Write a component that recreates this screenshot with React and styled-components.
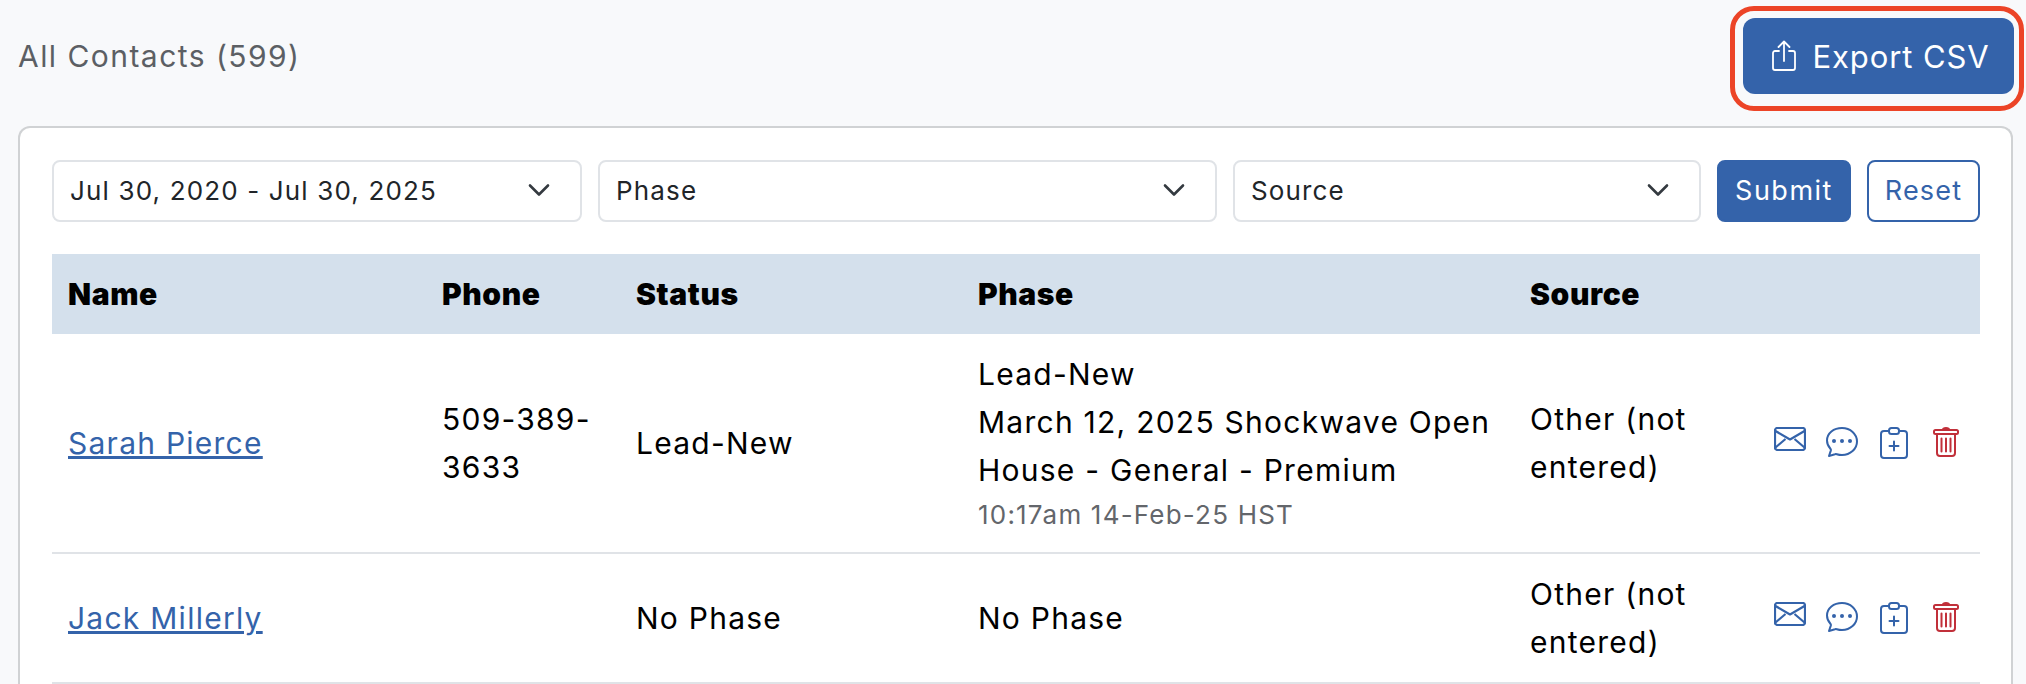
import React from "react";
import styled, { createGlobalStyle } from "styled-components";

const GlobalStyle = createGlobalStyle`
  html, body {
    margin: 0;
    height: 684px;
    overflow: hidden;
    background: #f8f9fb;
    font-family: "Inter", "Liberation Sans", sans-serif;
  }
  * { box-sizing: border-box; }
`;

const BLUE = "#3463aa";

const Page = styled.div`
  padding: 18px 12px 0 18px;
`;

const TopBar = styled.div`
  display: flex;
  align-items: center;
  justify-content: space-between;
  margin-bottom: 32px;
`;

const Title = styled.h1`
  margin: 0;
  font-size: 30px;
  font-weight: 400;
  letter-spacing: 1.45px;
  color: #5c5f64;
`;

const ExportButton = styled.button`
  position: relative;
  width: 271px;
  height: 76px;
  display: flex;
  align-items: center;
  justify-content: center;
  gap: 16px;
  padding: 0 0 0 5px;
  background: ${BLUE};
  color: #fff;
  border: none;
  border-radius: 12px;
  font: inherit;
  font-size: 31px;
  letter-spacing: 0.9px;

  &::after {
    content: "";
    position: absolute;
    top: -12px;
    bottom: -17px;
    left: -13px;
    right: -10px;
    border: 5px solid #ec4427;
    border-radius: 24px;
  }
`;

const Card = styled.div`
  margin-right: 1px;
  padding: 32px 31px 0 32px;
  background: #fff;
  border: 2px solid #d0d2d4;
  border-bottom: none;
  border-radius: 12px 12px 0 0;
`;

const Filters = styled.div`
  display: grid;
  grid-template-columns: 530px 619px 468px 134px 113px;
  gap: 16px;
  height: 62px;
  margin-bottom: 32px;
`;

const Select = styled.div`
  display: flex;
  align-items: center;
  justify-content: space-between;
  padding: 0 30px 2px 16px;
  background: #fff;
  border: 2px solid #e0e3e7;
  border-radius: 8px;
  font-size: 26px;
  letter-spacing: 1.15px;
  color: #212529;
`;

const SubmitButton = styled.button`
  background: ${BLUE};
  color: #fff;
  border: 2px solid ${BLUE};
  border-radius: 8px;
  font: inherit;
  font-size: 27px;
  letter-spacing: 1.5px;
  padding: 0 0 2px;
`;

const ResetButton = styled(SubmitButton)`
  background: #fff;
  color: ${BLUE};
  letter-spacing: 1.2px;
`;

const Table = styled.table`
  width: 100%;
  table-layout: fixed;
  border-collapse: collapse;
  color: #000;
`;

const HeadCell = styled.th`
  width: ${(p) => p.$w}px;
  height: 80px;
  padding: 0 16px;
  background: #d4e0ec;
  text-align: left;
  font-size: 30px;
  font-weight: 900;
  letter-spacing: 0.6px;
`;

const Row = styled.tr`
  border-bottom: 2px solid #e0e3e7;
`;

const Cell = styled.td`
  padding: 16px;
  font-size: 30px;
  line-height: 48px;
  letter-spacing: 1.25px;
  vertical-align: middle;
`;

const ActionCell = styled(Cell)`
  padding: 0 8px 0 0;
`;

const NameLink = styled.a`
  color: ${BLUE};
  text-decoration: underline;
`;

const Stamp = styled.div`
  font-size: 26px;
  line-height: 42px;
  letter-spacing: 1.2px;
  color: #63666b;
`;

const Actions = styled.div`
  display: flex;
  justify-content: flex-end;
`;

const ActionIcon = styled.span`
  width: 52px;
  display: flex;
  justify-content: center;
  color: ${(p) => (p.$danger ? "#c1303a" : BLUE)};
`;

const Chevron = () => (
  <svg width="22" height="14" viewBox="0 0 22 14" fill="none" stroke="#343a40" strokeWidth="2.6" strokeLinecap="round" strokeLinejoin="round">
    <path d="M2 2.5l9 9 9-9" />
  </svg>
);

const ShareIcon = () => (
  <svg width="24" height="32" viewBox="0 0 24 32" fill="none" stroke="currentColor" strokeWidth="1.8" strokeLinecap="round" strokeLinejoin="round">
    <path d="M7 11H3a2 2 0 0 0-2 2v15a2 2 0 0 0 2 2h18a2 2 0 0 0 2-2V13a2 2 0 0 0-2-2h-4" />
    <path d="M12 21V1.5M6.5 7L12 1.5 17.5 7" />
  </svg>
);

const MailIcon = () => (
  <svg width="32" height="24" viewBox="0 0 32 24" fill="none" stroke="currentColor" strokeWidth="2.2" strokeLinejoin="round">
    <rect x="1" y="1" width="30" height="22" rx="2.5" />
    <path d="M1.5 4l14.5 8.5L30.5 4M1.5 20.5l10-8.5M30.5 20.5l-10-8.5" />
  </svg>
);

const ChatIcon = () => (
  <svg width="32" height="30" viewBox="0 0 32 30" fill="none">
    <path d="M16 1C7.7 1 1 6.200 1 13.500c0 3.200 1.300 6 3.400 8.200.5.5.6 1.200.4 1.900L3 29l6-1.800c.6-.2 1.200-.2 1.800 0 1.600.5 3.300.8 5.200.8 8.300 0 15-6 15-13.500S24.300 1 16 1z" stroke="currentColor" strokeWidth="2" strokeLinejoin="round" />
    <circle cx="8" cy="14" r="2" fill="currentColor" />
    <circle cx="16" cy="14" r="2" fill="currentColor" />
    <circle cx="24" cy="14" r="2" fill="currentColor" />
  </svg>
);

const ClipboardIcon = () => (
  <svg width="28" height="32" viewBox="0 0 28 32" fill="none" stroke="currentColor" strokeWidth="2" strokeLinecap="round">
    <path d="M8 4H4a3 3 0 0 0-3 3v21a3 3 0 0 0 3 3h20a3 3 0 0 0 3-3V7a3 3 0 0 0-3-3h-4" />
    <rect x="9" y="1" width="10" height="6" rx="2.500" />
    <path d="M14 14.500v9M9.500 19h9" />
  </svg>
);

const TrashIcon = () => (
  <svg width="26" height="30" viewBox="0 0 26 30" fill="none" stroke="currentColor" strokeWidth="2" strokeLinecap="round" strokeLinejoin="round">
    <rect x="1" y="3" width="24" height="4" rx="1.500" />
    <path d="M10 2.500c0-1 1-1.500 3-1.500s3 .5 3 1.500" />
    <path d="M4 7v19a3 3 0 0 0 3 3h12a3 3 0 0 0 3-3V7" />
    <path d="M8.500 11.500v13M13 11.500v13M17.500 11.500v13" />
  </svg>
);

const RowActions = () => (
  <Actions>
    <ActionIcon><MailIcon /></ActionIcon>
    <ActionIcon><ChatIcon /></ActionIcon>
    <ActionIcon><ClipboardIcon /></ActionIcon>
    <ActionIcon $danger><TrashIcon /></ActionIcon>
  </Actions>
);

export default function App() {
  return (
    <Page>
      <GlobalStyle />
      <TopBar>
        <Title>All Contacts (599)</Title>
        <ExportButton>
          <ShareIcon />
          Export CSV
        </ExportButton>
      </TopBar>
      <Card>
        <Filters>
          <Select>Jul 30, 2020 - Jul 30, 2025<Chevron /></Select>
          <Select>Phase<Chevron /></Select>
          <Select>Source<Chevron /></Select>
          <SubmitButton>Submit</SubmitButton>
          <ResetButton>Reset</ResetButton>
        </Filters>
        <Table>
          <thead>
            <tr>
              <HeadCell $w={374}>Name</HeadCell>
              <HeadCell $w={194}>Phone</HeadCell>
              <HeadCell $w={342}>Status</HeadCell>
              <HeadCell $w={552}>Phase</HeadCell>
              <HeadCell $w={238}>Source</HeadCell>
              <HeadCell $w={228} />
            </tr>
          </thead>
          <tbody>
            <Row>
              <Cell><NameLink>Sarah Pierce</NameLink></Cell>
              <Cell>509-389-3633</Cell>
              <Cell>Lead-New</Cell>
              <Cell>
                Lead-New
                <br />
                March 12, 2025 Shockwave Open House - General - Premium
                <Stamp>10:17am 14-Feb-25 HST</Stamp>
              </Cell>
              <Cell>Other (not entered)</Cell>
              <ActionCell><RowActions /></ActionCell>
            </Row>
            <Row>
              <Cell><NameLink>Jack Millerly</NameLink></Cell>
              <Cell />
              <Cell>No Phase</Cell>
              <Cell>No Phase</Cell>
              <Cell>Other (not entered)</Cell>
              <ActionCell><RowActions /></ActionCell>
            </Row>
          </tbody>
        </Table>
      </Card>
    </Page>
  );
}
